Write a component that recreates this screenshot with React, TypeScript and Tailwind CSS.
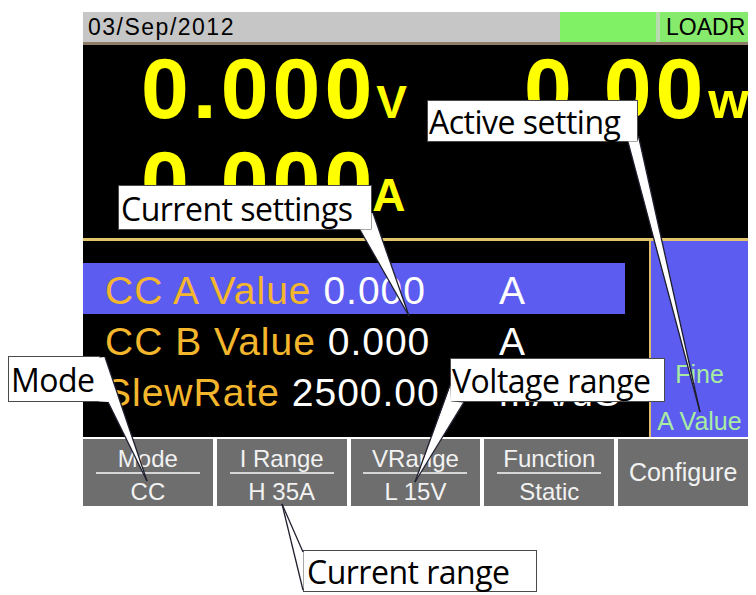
import React from "react";

interface Callout {
  text: string;
  box: string;
}

interface Wedge {
  fill: string;
  a: [number, number];
  b: [number, number];
  tip: [number, number];
}

const callouts: Callout[] = [
  { text: "Current settings", box: "left-[118px] top-[185px] w-[254px] h-[45px] leading-[45px] pl-[2px]" },
  { text: "Active setting", box: "left-[427px] top-[100px] w-[211px] h-[42px] leading-[42px] pl-[1px]" },
  { text: "Mode", box: "left-[8px] top-[356px] w-[92px] h-[46px] leading-[46px] pl-[2px]" },
  { text: "Voltage range", box: "left-[450px] top-[358px] w-[215px] h-[44px] leading-[44px] pl-[1px]" },
  { text: "Current range", box: "left-[303px] top-[550px] w-[234px] h-[42px] leading-[42px] pl-[3px]" },
];

const wedges: Wedge[] = [
  { fill: "360,229.5 409,316 373,213 371.5,213 371.5,229.5", a: [360, 230], b: [373, 213], tip: [409, 316] },
  { fill: "628,141.5 700,412 638.5,136 637.5,141.5", a: [628, 142], b: [638.5, 136], tip: [700, 412] },
  { fill: "99,357.5 105,357 147,481 108,402 99,401.5", a: [105, 357], b: [108, 402], tip: [147, 481] },
  { fill: "450.5,385 415,482 464,402.5 451,401.5", a: [450, 385], b: [464, 402], tip: [415, 482] },
  { fill: "303.5,552 282,504 303.5,590", a: [303, 552], b: [303, 590], tip: [282, 504] },
];

const rows = [
  { label: "CC A Value", value: "0.000", unit: "A", active: true },
  { label: "CC B Value", value: "0.000", unit: "A", active: false },
  { label: "SlewRate", value: "2500.00", unit: "mA/uS", active: false },
];

const softkeys = [
  { top: "Mode", bottom: "CC" },
  { top: "I Range", bottom: "H 35A" },
  { top: "VRange", bottom: "L 15V" },
  { top: "Function", bottom: "Static" },
];

const App: React.FC = () => {
  return (
    <div className="relative w-[756px] h-[595px] overflow-hidden bg-white font-['Liberation_Sans',Arial,sans-serif]">
      <div className="pt-[12px] pl-[83px]">
        <div className="w-[665px]">
          {/* status bar */}
          <div className="flex h-[30px] bg-[#c6c6c6] text-black">
            <div className="flex-1 pl-[5px] text-[23px] leading-[30px] tracking-[1.5px]">03/Sep/2012</div>
            <div className="w-[96px] bg-[#80f064]" />
            <div className="w-[4px] bg-[#b8dcb0]" />
            <div className="w-[88px] overflow-hidden whitespace-nowrap bg-[#86ea6c] pl-[6px] text-[23px] leading-[30px]">
              LOADR
            </div>
          </div>
          <div className="h-[3px] bg-[#8e7c68]" />

          {/* measurements */}
          <div className="h-[193px] bg-black font-bold text-[#ffff00]">
            <div className="flex items-baseline pl-[58px]">
              <span className="text-[86px] leading-[86px] tracking-[4px]">0.000</span>
              <span className="text-[46px] leading-none">V</span>
              <span className="ml-[117px] text-[86px] leading-[86px] tracking-[4px]">0.00</span>
              <span className="ml-[1px] text-[52px] leading-none">w</span>
            </div>
            <div className="mt-[7px] flex items-baseline pl-[58px]">
              <span className="text-[86px] leading-[86px] tracking-[4px]">0.000</span>
              <span className="-ml-[4px] text-[46px] leading-none">A</span>
            </div>
          </div>
          <div className="h-[3px] bg-[#e2c46c]" />

          {/* settings */}
          <div className="flex h-[196px]">
            <div className="flex-1 bg-black pt-[22px] text-[39px] tracking-[1px]">
              {rows.map((r) => (
                <div
                  key={r.label}
                  className={`flex h-[51px] w-[542px] whitespace-nowrap leading-[55px] ${r.active ? "bg-[#5c5cf0]" : ""}`}
                >
                  <div className="w-[416px] pl-[22px]">
                    <span className="text-[#f4b62c]">{r.label}</span>
                    <span className="text-white"> {r.value}</span>
                  </div>
                  <div className="text-white">{r.unit}</div>
                </div>
              ))}
            </div>
            <div className="flex w-[99px] flex-col items-center justify-end border-l-2 border-[#dcbc6c] bg-[#5c5cf0] pb-[1px] text-[25px] leading-[30px] text-[#a8eca2]">
              <div className="mb-[17px]">Fine</div>
              <div className="whitespace-nowrap">A Value</div>
            </div>
          </div>

          {/* softkeys */}
          <div className="mt-[2px] grid h-[67px] grid-cols-5 gap-[4px] text-[#f2f2f2]">
            {softkeys.map((k) => (
              <div key={k.top} className="flex flex-col items-center bg-[#6e6e6e] pt-[8px] text-[24px]">
                <div className="w-[104px] border-b-2 border-[#d6d6d6] pb-[1px] text-center leading-[24px]">{k.top}</div>
                <div className="mt-[6px] leading-[24px]">{k.bottom}</div>
              </div>
            ))}
            <div className="flex items-center justify-center bg-[#6e6e6e] text-[25px]">Configure</div>
          </div>
        </div>
      </div>

      {/* annotation labels */}
      {callouts.map((c) => (
        <div
          key={c.text}
          className={`absolute ${c.box} whitespace-nowrap border border-[#4a4a4a] bg-white font-['Open_Sans',sans-serif] text-[32px] tracking-[-0.5px] text-black`}
        >
          {c.text}
        </div>
      ))}
      <svg className="pointer-events-none absolute left-0 top-0" width="756" height="595" viewBox="0 0 756 595">
        {wedges.map((w, i) => (
          <g key={i}>
            <polygon points={w.fill} fill="#ffffff" />
            <line x1={w.a[0]} y1={w.a[1]} x2={w.tip[0]} y2={w.tip[1]} stroke="#1e1e2e" strokeWidth="1.3" />
            <line x1={w.b[0]} y1={w.b[1]} x2={w.tip[0]} y2={w.tip[1]} stroke="#1e1e2e" strokeWidth="1.3" />
          </g>
        ))}
      </svg>
    </div>
  );
};

export default App;
